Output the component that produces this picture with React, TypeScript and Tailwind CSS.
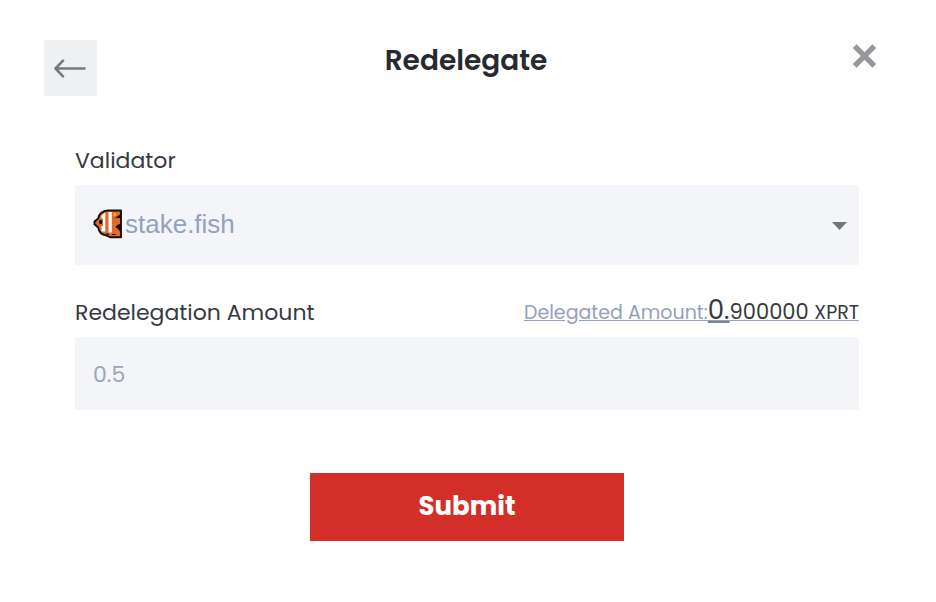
import { useState } from 'react'

const validators = ['stake.fish']

function ArrowLeftIcon() {
  return (
    <svg width="33" height="20" viewBox="0 0 33 20" fill="none" stroke="#747a81" strokeWidth="2.6" strokeLinecap="round" strokeLinejoin="round" aria-hidden="true">
      <path d="M30.5 10.5H1.5M9 2.7 1.5 10.5 9 18.3" />
    </svg>
  )
}

function CloseIcon() {
  return (
    <svg width="25" height="25" viewBox="0 0 25 25" fill="none" stroke="#95979b" strokeWidth="5.4" aria-hidden="true">
      <path d="M2.7 2.2 22.3 21.8M22.3 2.2 2.7 21.8" />
    </svg>
  )
}

function FishLogo() {
  return (
    <svg width="30" height="30" viewBox="0 0 30 30" className="shrink-0" aria-hidden="true">
      <path d="M28 1.5H15C9.500 1.8 6.300 4 5.200 9.500L1.500 12.500V15.200L5.200 18.500C6 22.500 8 25.500 12 26L17 28.2H28Z" fill="#e2682b" stroke="#15100e" strokeWidth="1.9" strokeLinejoin="round" />
      <path d="M8.500 6.500 12.300 3.500V22.500H8.500V17H10V9.500H8.500Z" fill="#fff" />
      <path d="M15.500 3h3.300V23.500H15.500Z" fill="#fff" />
      <ellipse cx="7.700" cy="13" rx="1.600" ry="2.200" fill="#15100e" />
      <path d="M20.500 4h2.500v3h-2.500Z" fill="#f6a52c" />
      <path d="M28 4C26.500 7 24 6.500 22.300 9.500 24.500 8.500 26 9.500 28 9ZM28 15C25 15 23 16.500 22.500 19 25 18 25.500 22 28 23Z" fill="#15100e" />
      <path d="M13 25.200h3M19 25.500h3.500" stroke="#15100e" strokeWidth="1.2" />
    </svg>
  )
}

export default function App() {
  const [validator, setValidator] = useState(validators[0])
  const [amount, setAmount] = useState('')

  return (
    <main className="bg-white pb-15 font-['Poppins','Inter',sans-serif] text-[#36393f]">
      <header className="grid grid-cols-[1fr_auto_1fr] items-start pt-10 pr-12 pl-11">
        <button type="button" aria-label="Back" className="flex h-14 w-[53px] items-center justify-center bg-[#eff0f2]">
          <ArrowLeftIcon />
        </button>
        <h1 className="text-[28px] leading-[42px] font-semibold text-[#272b30]">Redelegate</h1>
        <button type="button" aria-label="Close" className="mt-1 mr-[11px] justify-self-end">
          <CloseIcon />
        </button>
      </header>

      <form className="mt-[49px] flex flex-col pr-[77px] pl-[75px]" onSubmit={(e) => e.preventDefault()}>
        <label htmlFor="validator" className="mb-2 self-start text-[22px] leading-8">
          Validator
        </label>
        <div className="flex h-20 items-center bg-[#f4f5f9] pr-3 pb-0.5 pl-[18px]">
          <FishLogo />
          <select
            id="validator"
            value={validator}
            onChange={(e) => setValidator(e.target.value)}
            className="ml-0.5 h-full min-w-0 flex-1 appearance-none bg-transparent font-['Liberation_Sans',Arial,sans-serif] text-[26px] text-[#95a1bb] outline-none"
          >
            {validators.map((name) => (
              <option key={name} value={name}>
                {name}
              </option>
            ))}
          </select>
          <svg width="15" height="8" viewBox="0 0 15 8" fill="#747477" className="pointer-events-none mt-1" aria-hidden="true">
            <path d="M0 0h15L7.5 8Z" />
          </svg>
        </div>

        <div className="mt-8 mb-2 flex h-8 items-center justify-between">
          <label htmlFor="amount" className="text-[22px] leading-8">
            Redelegation Amount
          </label>
          <a href="#amount" onClick={() => setAmount('0.900000')} className="pb-1 text-[19px] leading-8 whitespace-nowrap text-[#95a1bb] underline">
            Delegated Amount:
            <span className="text-[#36393f]">
              <span className="text-[26px] underline decoration-[#7f8596]">0.</span>
              <span className="text-[21px]">900000 </span>
              <span className="text-[19px]">XPRT</span>
            </span>
          </a>
        </div>
        <input
          id="amount"
          type="text"
          inputMode="decimal"
          placeholder="0.5"
          value={amount}
          onChange={(e) => setAmount(e.target.value)}
          className="h-[73px] w-full bg-[#f4f5f9] px-[18px] pt-0.5 text-[22px] outline-none placeholder:text-[#9aa5bd]"
        />

        <button type="submit" className="mt-[63px] h-[68px] w-2/5 self-center bg-[#d32f28] pb-0.5 text-[26px] font-bold text-white">
          Submit
        </button>
      </form>
    </main>
  )
}
